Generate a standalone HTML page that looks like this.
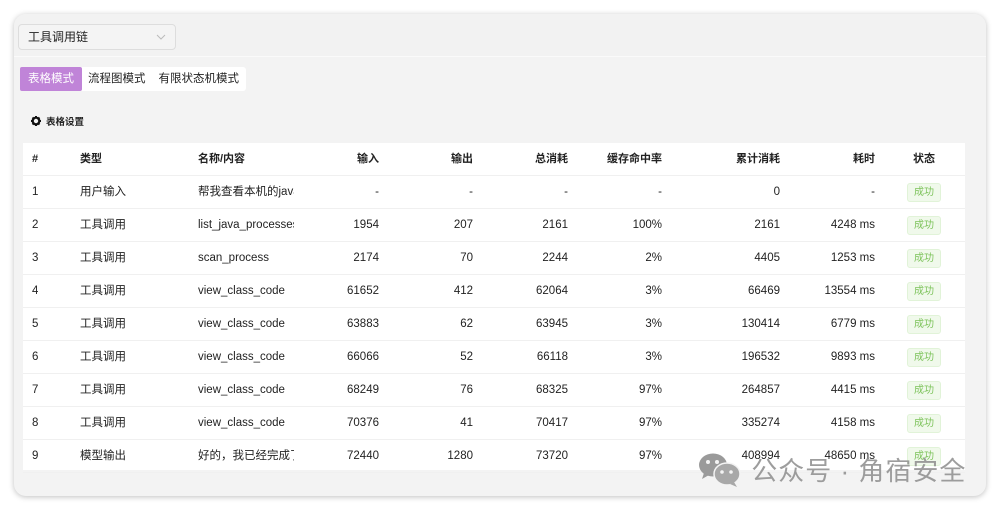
<!DOCTYPE html>
<html><head><meta charset="utf-8"><style>
*{margin:0;padding:0;box-sizing:border-box}
body{width:1000px;height:510px;background:#fff;font-family:"Liberation Sans","Noto Sans CJK SC",sans-serif;position:relative;overflow:hidden;color:#222}
.card{position:absolute;left:14px;top:14px;width:972px;height:482px;background:#f3f3f3;border-radius:12px;box-shadow:0 1px 6px rgba(0,0,0,.25);overflow:hidden}
.top{position:absolute;left:0;top:0;width:100%;height:43px;background:#f2f2f2;border-bottom:1px solid #fafafa}
.sel{position:absolute;left:4px;top:10px;width:158px;height:26px;border:1px solid #ddd;border-radius:4px;background:#f4f4f4;font-size:12px;line-height:24px;padding-left:9px;color:#222}
.sel svg{position:absolute;right:9px;top:9px}
.tabs{position:absolute;left:6px;top:53px;height:24px;background:#fff;border-radius:3px;display:flex;font-size:11.5px;line-height:24px}
.tabs span{padding:0 7px 0 6px}
.tabs .on{background:#c084d8;color:#fff;border-radius:2px;padding:0 8px}
.set{position:absolute;left:17px;top:100px;font-size:9.5px;font-weight:bold;display:flex;align-items:center;gap:5px}
.tbl{position:absolute;left:9px;top:129px;width:942px;height:327px;background:#fff}
.row{position:absolute;left:0;width:942px;height:33px;border-bottom:1px solid #f0f0f0;font-size:11.5px}
.row div{position:absolute;top:0;line-height:33px;white-space:nowrap;overflow:hidden}
.h{font-weight:bold;font-size:11px}
.r{text-align:right}
.b{position:absolute;left:884px;top:7px;width:34px;height:19px;background:#f0f9eb;border:1px solid #e1f3d8;border-radius:3px;color:#7dc35b;font-size:10px;line-height:17px;text-align:center}
.wm{position:absolute;left:697px;top:451px;display:flex;align-items:center;font-size:26px;color:rgba(140,140,140,.85);letter-spacing:1px}
</style></head><body>
<div class="card">
<div class="top"><div class="sel">工具调用链<svg width="10" height="6" viewBox="0 0 10 6"><path d="M1 1l4 4 4-4" stroke="#bbb" fill="none"/></svg></div></div>
<div class="tabs"><span class="on">表格模式</span><span>流程图模式</span><span>有限状态机模式</span></div>
<div class="set"><svg width="10" height="10" viewBox="0 0 10 10"><circle cx="5" cy="5" r="3.3" fill="none" stroke="#111" stroke-width="2.2"/><g stroke="#111" stroke-width="2"><path d="M5 0v2M5 8v2M0 5h2M8 5h2M1.5 1.5l1.4 1.4M7.1 7.1l1.4 1.4M1.5 8.5l1.4-1.4M7.1 2.9l1.4-1.4"/></g></svg>表格设置</div>
<div class="tbl" id="t"></div>
</div>
<div class="wm"><svg width="46" height="36" viewBox="0 0 46 36"><ellipse cx="16" cy="13" rx="14" ry="11.5" fill="#9a9a9a"/><path d="M7 21l-2 6 7-4z" fill="#9a9a9a"/><ellipse cx="30" cy="22" rx="13" ry="11" fill="#a8a8a8" stroke="#f3f3f3" stroke-width="1.5"/><path d="M37 30l3 5-7-3z" fill="#a8a8a8"/><circle cx="11" cy="10" r="2" fill="#f3f3f3"/><circle cx="20" cy="10" r="2" fill="#f3f3f3"/><circle cx="25" cy="20" r="1.8" fill="#f3f3f3"/><circle cx="34" cy="20" r="1.8" fill="#f3f3f3"/></svg>&nbsp;公众号 · 角宿安全</div>
<script>
var d=[["1","用户输入","帮我查看本机的java","-","-","-","-","0","-"],
["2","工具调用","list_java_processes","1954","207","2161","100%","2161","4248 ms"],
["3","工具调用","scan_process","2174","70","2244","2%","4405","1253 ms"],
["4","工具调用","view_class_code","61652","412","62064","3%","66469","13554 ms"],
["5","工具调用","view_class_code","63883","62","63945","3%","130414","6779 ms"],
["6","工具调用","view_class_code","66066","52","66118","3%","196532","9893 ms"],
["7","工具调用","view_class_code","68249","76","68325","97%","264857","4415 ms"],
["8","工具调用","view_class_code","70376","41","70417","97%","335274","4158 ms"],
["9","模型输出","好的，我已经完成了","72440","1280","73720","97%","408994","48650 ms"]];
var R=[356,450,545,639,757,852];
function row(a,y,h){var s='<div class="row'+(h?' h':'')+'" style="top:'+y+'px">';
s+='<div style="left:9px">'+a[0]+'</div><div style="left:57px">'+a[1]+'</div><div style="left:175px;width:96px">'+a[2]+'</div>';
for(var i=0;i<6;i++)s+='<div class="r" style="left:'+(R[i]-100)+'px;width:100px">'+a[i+3]+'</div>';
s+=h?'<div style="left:890px">状态</div>':'<span class="b">成功</span>';return s+'</div>';}
var t=row(["#","类型","名称/内容","输入","输出","总消耗","缓存命中率","累计消耗","耗时"],0,1);
d.forEach(function(a,i){t+=row(a,33+i*33,0)});
document.getElementById('t').innerHTML=t;
</script>
</body></html>
